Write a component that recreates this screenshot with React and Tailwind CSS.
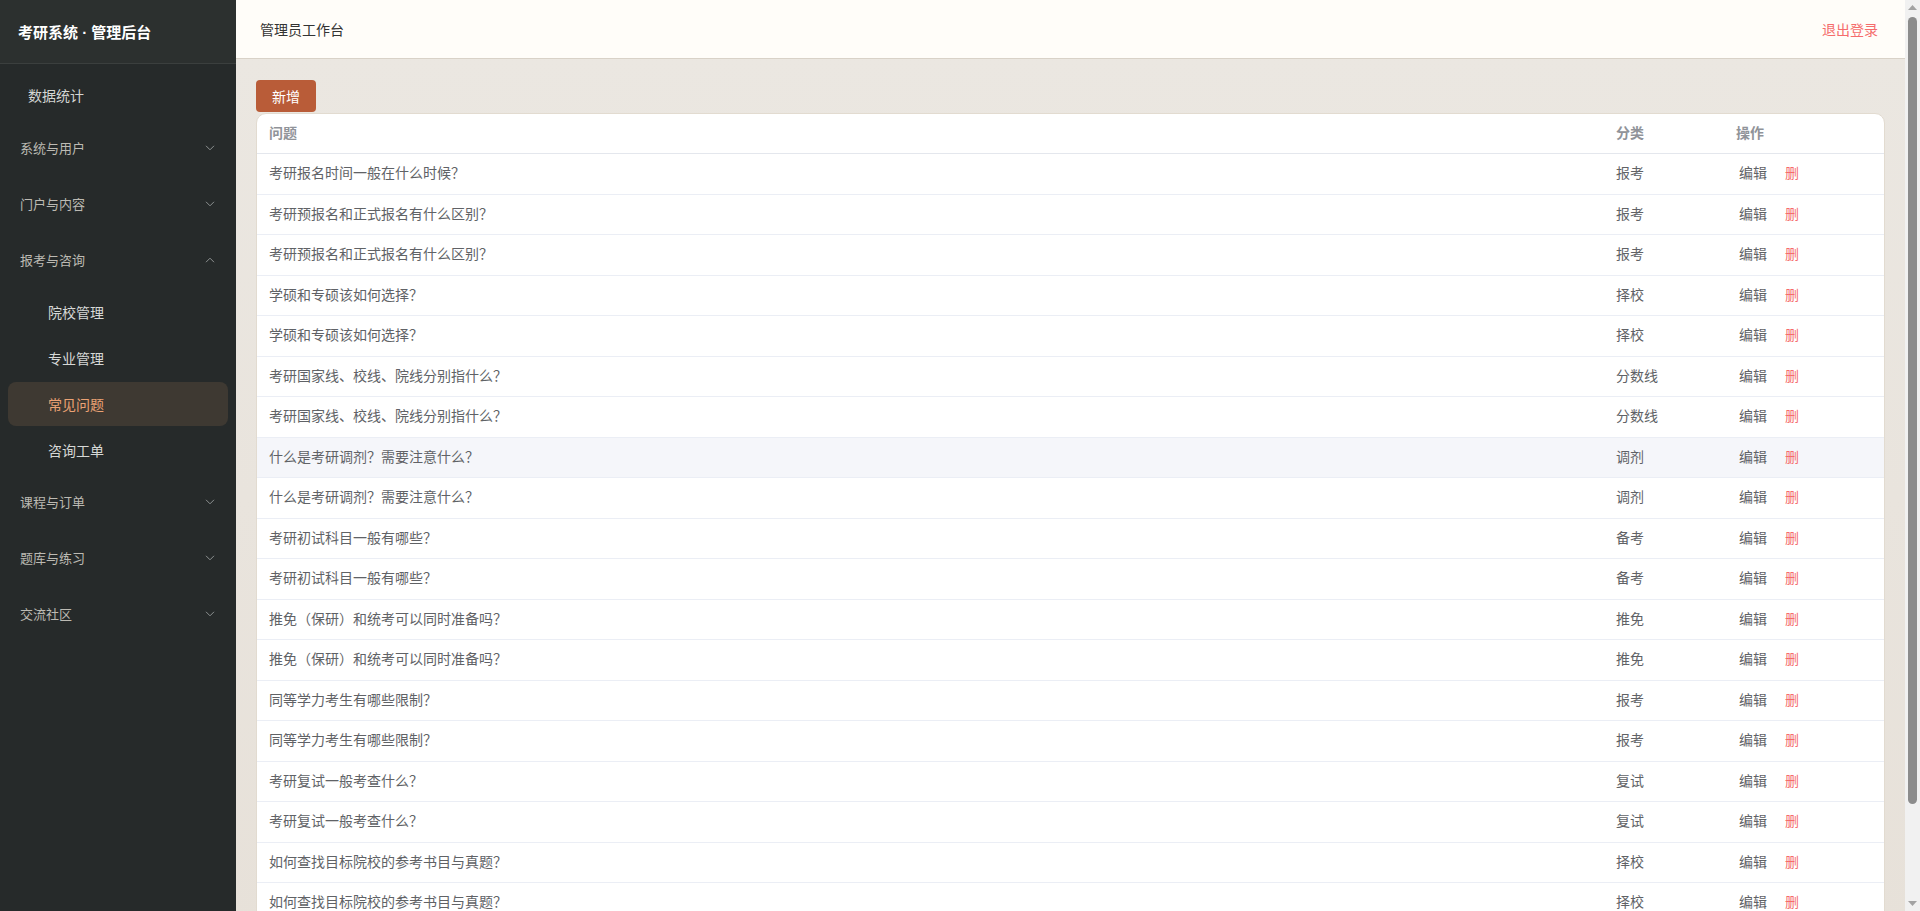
import { useState } from 'react';

const FONT = { fontFamily: '"Noto Sans CJK SC", "Noto Sans", sans-serif' };

const rows = [
  ['考研报名时间一般在什么时候？', '报考'],
  ['考研预报名和正式报名有什么区别？', '报考'],
  ['考研预报名和正式报名有什么区别？', '报考'],
  ['学硕和专硕该如何选择？', '择校'],
  ['学硕和专硕该如何选择？', '择校'],
  ['考研国家线、校线、院线分别指什么？', '分数线'],
  ['考研国家线、校线、院线分别指什么？', '分数线'],
  ['什么是考研调剂？需要注意什么？', '调剂'],
  ['什么是考研调剂？需要注意什么？', '调剂'],
  ['考研初试科目一般有哪些？', '备考'],
  ['考研初试科目一般有哪些？', '备考'],
  ['推免（保研）和统考可以同时准备吗？', '推免'],
  ['推免（保研）和统考可以同时准备吗？', '推免'],
  ['同等学力考生有哪些限制？', '报考'],
  ['同等学力考生有哪些限制？', '报考'],
  ['考研复试一般考查什么？', '复试'],
  ['考研复试一般考查什么？', '复试'],
  ['如何查找目标院校的参考书目与真题？', '择校'],
  ['如何查找目标院校的参考书目与真题？', '择校'],
];

const groups = [
  { title: '系统与用户', children: [] },
  { title: '门户与内容', children: [] },
  { title: '报考与咨询', open: true, children: ['院校管理', '专业管理', '常见问题', '咨询工单'] },
  { title: '课程与订单', children: [] },
  { title: '题库与练习', children: [] },
  { title: '交流社区', children: [] },
];

function Chevron({ up }) {
  return (
    <svg width="10" height="6" viewBox="0 0 10 6" className="text-[#8d9191]">
      <path d={up ? 'M1 5.2L5 1.2L9 5.2' : 'M1 0.8L5 4.8L9 0.8'} fill="none" stroke="currentColor" strokeWidth="1" />
    </svg>
  );
}

function Sidebar() {
  const active = '常见问题';
  return (
    <aside className="w-[236px] shrink-0 h-full bg-[#262a2a] flex flex-col">
      <div className="h-[64px] shrink-0 bg-[#2c302f] border-b border-[#3b3f3e] flex items-center px-[18px]">
        <span className="text-[15px] font-bold text-white leading-none">
          考研系统<span style={{ fontFamily: '"Liberation Sans", sans-serif' }}> · </span>管理后台
        </span>
      </div>
      <nav className="pt-[9px]">
        <div className="mx-2 h-11 mb-[3px] flex items-center px-5 text-[14px] text-[#d3d5d2] rounded-lg">数据统计</div>
        {groups.map(g => (
          <div key={g.title}>
            <div className="h-14 flex items-center justify-between pl-5 pr-[21px] text-[13px] text-[#bcbab3]">
              <span>{g.title}</span>
              <Chevron up={g.open} />
            </div>
            {g.open && (
              <div className="pb-[2px]">
                {g.children.map(c => (
                  <div
                    key={c}
                    className={`mx-2 mt-[2px] h-11 flex items-center pl-10 text-[14px] rounded-lg ${c === active ? 'bg-[#3e3932] text-[#eba274]' : 'text-[#d6d8d6]'}`}
                  >
                    {c}
                  </div>
                ))}
              </div>
            )}
          </div>
        ))}
      </nav>
    </aside>
  );
}

function Row({ q, cat, highlight }) {
  return (
    <div className={`grid grid-cols-[1fr_120px_160px] border-b border-[#ebeef5] text-[14px] text-[#606266] leading-[19.5px] ${highlight ? 'bg-[#f5f6fa]' : ''}`}>
      <div className="px-3 pt-[9px] pb-[11px]">{q}</div>
      <div className="px-3 pt-[9px] pb-[11px]">{cat}</div>
      <div className="px-3 pt-[9px] pb-[11px] flex items-center gap-3">
        <button className="px-[3px] text-[#5f6266]">编辑</button>
        <button className="px-[3px] text-[#f56c6c]">删</button>
      </div>
    </div>
  );
}

function ScrollBar() {
  return (
    <div className="w-[15px] shrink-0 h-full bg-[#f1f1f1] flex flex-col items-center">
      <div className="h-[15px] flex items-center justify-center">
        <svg width="9" height="5" viewBox="0 0 9 5"><path d="M0 5L4.5 0L9 5Z" fill="#a3a3a3" /></svg>
      </div>
      <div className="mt-[2px] w-[9px] h-[787px] rounded-full bg-[#8c8c8c]" />
      <div className="flex-1" />
      <div className="h-[15px] flex items-center justify-center">
        <svg width="9" height="5" viewBox="0 0 9 5"><path d="M0 0L4.5 5L9 0Z" fill="#a3a3a3" /></svg>
      </div>
    </div>
  );
}

export default function App() {
  const [hover] = useState(7);
  return (
    <div className="flex h-screen overflow-hidden bg-[#e9e4dd]" style={FONT}>
      <Sidebar />
      <div className="flex-1 min-w-0 flex flex-col overflow-hidden">
        <header className="h-[59px] shrink-0 bg-[#fffdf9] border-b border-[#d9d2c8] flex items-center justify-between pl-6 pr-[27px]">
          <span className="text-[14px] text-[#333]">管理员工作台</span>
          <button className="text-[14px] text-[#f56c6c]">退出登录</button>
        </header>
        <main className="flex-1 px-5 pt-[21px] pb-5 bg-gradient-to-b from-[#ebe7e1] to-[#e7e1d9]">
          <button className="w-[60px] h-8 rounded bg-[#b95c38] text-white text-[14px]">新增</button>
          <div className="mt-px bg-white rounded-[10px] border border-[#e2dbd0] overflow-hidden">
            <div className="grid grid-cols-[1fr_120px_160px] h-[40px] items-center pb-[2px] border-b border-[#e4e7ed] text-[14px] font-semibold text-[#909399]">
              <div className="px-3">问题</div>
              <div className="px-3">分类</div>
              <div className="px-3">操作</div>
            </div>
            {rows.map((r, i) => (
              <Row key={i} q={r[0]} cat={r[1]} highlight={i === hover} />
            ))}
          </div>
        </main>
      </div>
      <ScrollBar />
    </div>
  );
}
